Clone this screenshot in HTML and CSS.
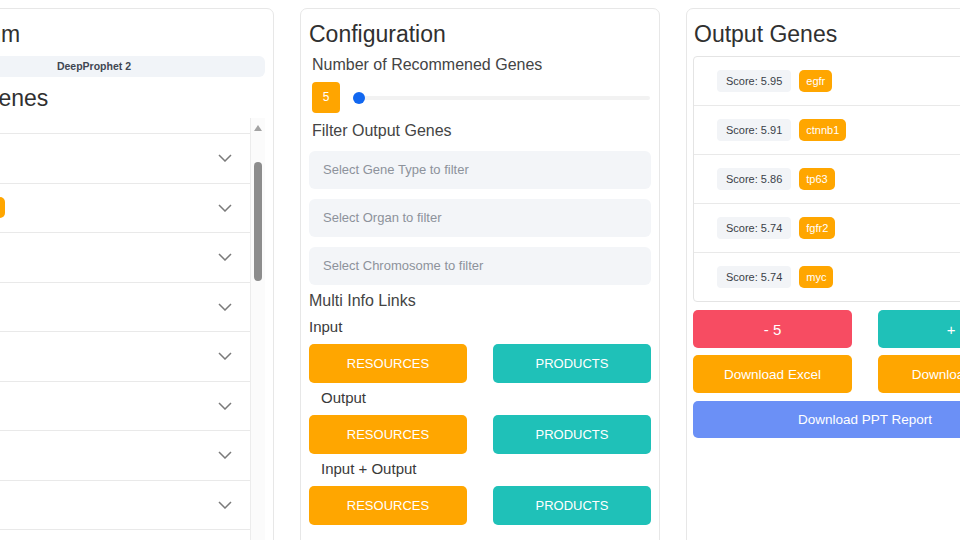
FILE: index.html
```html
<!DOCTYPE html>
<html lang="en">
<head>
  <meta charset="UTF-8">
  <meta name="viewport" content="width=device-width, initial-scale=1.0">
  <title>Gene Recommender</title>
  <link rel="stylesheet" href="styles.css">
</head>
<body>
  <div class="board">

    <!-- Algorithm + input genes -->
    <section class="panel">
      <h2>Algorithm</h2>
      <div class="model-pill">DeepProphet 2</div>
      <h2 class="sub-title">Input Genes</h2>
      <div class="gene-box">
        <div class="gene-rows">
          <div class="rows-stub"></div>
          <div class="gene-row"><span class="gene-name">kras</span><svg class="chevron" viewBox="0 0 14 8"><path d="M1 1l6 6 6-6"/></svg></div>
          <div class="gene-row"><span class="tag tag-wide">selected</span><svg class="chevron" viewBox="0 0 14 8"><path d="M1 1l6 6 6-6"/></svg></div>
          <div class="gene-row"><span class="gene-name">pik3ca</span><svg class="chevron" viewBox="0 0 14 8"><path d="M1 1l6 6 6-6"/></svg></div>
          <div class="gene-row"><span class="gene-name">tp53</span><svg class="chevron" viewBox="0 0 14 8"><path d="M1 1l6 6 6-6"/></svg></div>
          <div class="gene-row"><span class="gene-name">pten</span><svg class="chevron" viewBox="0 0 14 8"><path d="M1 1l6 6 6-6"/></svg></div>
          <div class="gene-row"><span class="gene-name">braf</span><svg class="chevron" viewBox="0 0 14 8"><path d="M1 1l6 6 6-6"/></svg></div>
          <div class="gene-row"><span class="gene-name">apc</span><svg class="chevron" viewBox="0 0 14 8"><path d="M1 1l6 6 6-6"/></svg></div>
          <div class="gene-row"><span class="gene-name">nras</span><svg class="chevron" viewBox="0 0 14 8"><path d="M1 1l6 6 6-6"/></svg></div>
          <div class="gene-row"><span class="gene-name">erbb2</span><svg class="chevron" viewBox="0 0 14 8"><path d="M1 1l6 6 6-6"/></svg></div>
        </div>
        <div class="scrollbar">
          <div class="scroll-up"></div>
          <div class="scroll-thumb"></div>
        </div>
      </div>
    </section>

    <!-- Configuration -->
    <section class="panel">
      <h2>Configuration</h2>
      <div class="label label-first">Number of Recommened Genes</div>
      <div class="slider-row">
        <div class="count-box">5</div>
        <div class="slider">
          <div class="slider-thumb"></div>
        </div>
      </div>
      <div class="label label-filter">Filter Output Genes</div>
      <div class="select-box">Select Gene Type to filter</div>
      <div class="select-box">Select Organ to filter</div>
      <div class="select-box">Select Chromosome to filter</div>
      <div class="links-title">Multi Info Links</div>
      <div class="link-label">Input</div>
      <div class="btn-grid">
        <button class="btn btn-orange">RESOURCES</button>
        <button class="btn btn-teal">PRODUCTS</button>
      </div>
      <div class="link-label indent">Output</div>
      <div class="btn-grid">
        <button class="btn btn-orange">RESOURCES</button>
        <button class="btn btn-teal">PRODUCTS</button>
      </div>
      <div class="link-label indent">Input + Output</div>
      <div class="btn-grid">
        <button class="btn btn-orange">RESOURCES</button>
        <button class="btn btn-teal">PRODUCTS</button>
      </div>
    </section>

    <!-- Output genes -->
    <section class="panel panel-out">
      <h2>Output Genes</h2>
      <div class="out-list">
        <div class="out-row"><span class="score">Score: 5.95</span><span class="tag">egfr</span></div>
        <div class="out-row"><span class="score">Score: 5.91</span><span class="tag">ctnnb1</span></div>
        <div class="out-row"><span class="score">Score: 5.86</span><span class="tag">tp63</span></div>
        <div class="out-row"><span class="score">Score: 5.74</span><span class="tag">fgfr2</span></div>
        <div class="out-row"><span class="score">Score: 5.74</span><span class="tag">myc</span></div>
      </div>
      <div class="btn-grid out-actions">
        <button class="btn btn-red btn-big">- 5</button>
        <button class="btn btn-teal btn-big">+ 5</button>
      </div>
      <div class="btn-grid out-downloads">
        <button class="btn btn-orange">Download Excel</button>
        <button class="btn btn-orange">Download CSV</button>
      </div>
      <button class="btn btn-blue btn-full">Download PPT Report</button>
    </section>

  </div>
</body>
</html>
```

FILE: styles.css
```css
html, body {
  height: 540px;
}
body {
  margin: 0;
  overflow: hidden;
  background: #fff;
  font-family: "Liberation Sans", Arial, sans-serif;
  color: #333;
}
.board {
  display: flex;
  gap: 26px;
  margin-left: -86px;
  padding-top: 8px;
}
.panel {
  flex-shrink: 0;
  box-sizing: border-box;
  width: 360px;
  height: 580px;
  padding: 11px 8px 0;
  border: 1px solid #e7e7e7;
  border-radius: 7px;
  background: #fff;
}
.panel-out {
  padding-left: 6px;
}
h2 {
  margin: 0;
  font-size: 23px;
  font-weight: normal;
  line-height: 28px;
  color: #303030;
}
.panel-out h2 {
  padding-left: 1px;
}

/* left panel */
.model-pill {
  margin-top: 8px;
  height: 21px;
  line-height: 21px;
  border-radius: 6px;
  background: #f1f4f8;
  text-align: center;
  font-size: 10.5px;
  font-weight: bold;
  color: #3f4652;
}
.sub-title {
  margin-top: 7px;
}
.gene-box {
  display: flex;
  margin-top: 6px;
  height: 460px;
}
.gene-rows {
  flex: 1;
}
.rows-stub {
  height: 15px;
}
.gene-row {
  box-sizing: border-box;
  display: flex;
  align-items: center;
  justify-content: space-between;
  height: 49.5px;
  padding: 0 18px 0 16px;
  border-top: 1px solid #e9e9e9;
  font-size: 13px;
  color: #444;
}
.chevron {
  width: 14px;
  height: 8px;
  fill: none;
  stroke: #7a7a7a;
  stroke-width: 1.5;
}
.tag-wide {
  min-width: 52px;
  height: 21px !important;
  line-height: 21px !important;
}
.scrollbar {
  width: 14px;
  border-left: 1px solid #ececec;
  background: #fbfbfb;
}
.scroll-up {
  width: 0;
  height: 0;
  margin: 7px auto 0;
  border-left: 4.5px solid transparent;
  border-right: 4.5px solid transparent;
  border-bottom: 6px solid #a3a3a3;
}
.scroll-thumb {
  width: 8px;
  height: 119px;
  margin: 31px 0 0 3px;
  border-radius: 4px;
  background: #8d8d8d;
}

/* configuration */
.label {
  font-size: 16px;
  line-height: 20px;
  color: #444;
  margin-left: 3px;
}
.label-first {
  margin-top: 7px;
}
.label-filter {
  margin-top: 8px;
}
.slider-row {
  display: flex;
  align-items: center;
  gap: 13px;
  margin: 7px 0 0 3px;
}
.count-box {
  width: 28px;
  height: 31px;
  line-height: 31px;
  border-radius: 4px;
  background: #ffa500;
  color: #fff;
  text-align: center;
  font-size: 12px;
}
.slider {
  position: relative;
  flex: 1;
  height: 4px;
  margin-right: 1px;
  border-radius: 2px;
  background: #f2f2f2;
}
.slider-thumb {
  position: absolute;
  left: 0;
  top: -4px;
  width: 12px;
  height: 12px;
  border-radius: 50%;
  background: #1167f0;
}
.select-box {
  height: 38px;
  line-height: 38px;
  margin-top: 10px;
  padding-left: 14px;
  border-radius: 6px;
  background: #f3f5f8;
  font-size: 13px;
  color: #8d929b;
}
.links-title {
  margin-top: 6px;
  font-size: 16px;
  line-height: 20px;
  color: #444;
}
.link-label {
  margin-top: 7px;
  font-size: 15px;
  line-height: 18px;
  color: #3a3a3a;
}
.link-label.indent {
  margin-top: 6px;
  padding-left: 12px;
}
.btn-grid {
  display: grid;
  grid-template-columns: 1fr 1fr;
  gap: 26px;
  margin-top: 8px;
}
.btn {
  height: 39px;
  border: none;
  border-radius: 5px;
  color: #fff;
  font-family: "Liberation Sans", Arial, sans-serif;
  font-size: 13px;
  padding: 0;
}
.btn-orange {
  background: #ffa600;
}
.btn-teal {
  background: #1fc1b8;
}
.btn-red {
  background: #f74c62;
}
.btn-blue {
  background: #6b90f6;
}
.btn-big {
  font-size: 15px;
  height: 38px;
}

/* output genes */
.out-list {
  margin-top: 8px;
  border: 1px solid #e4e4e4;
  border-radius: 4px;
}
.out-row {
  display: flex;
  align-items: center;
  gap: 8px;
  height: 48px;
  padding-left: 23px;
}
.out-row + .out-row {
  border-top: 1px solid #e9e9e9;
}
.score {
  height: 22px;
  line-height: 22px;
  padding: 0 9px;
  border-radius: 4px;
  background: #f2f4f7;
  font-size: 11px;
  color: #3a3f47;
}
.tag {
  height: 22px;
  line-height: 22px;
  padding: 0 7px;
  border-radius: 5px;
  background: #ffa600;
  font-size: 11px;
  color: #fff;
}
.out-actions {
  margin-top: 8px;
}
.out-downloads {
  margin-top: 7px;
}
.out-downloads .btn {
  height: 38px;
  font-size: 13.5px;
}
.btn-full {
  display: block;
  width: 100%;
  height: 37px;
  margin-top: 8px;
  font-size: 13.5px;
}
```
